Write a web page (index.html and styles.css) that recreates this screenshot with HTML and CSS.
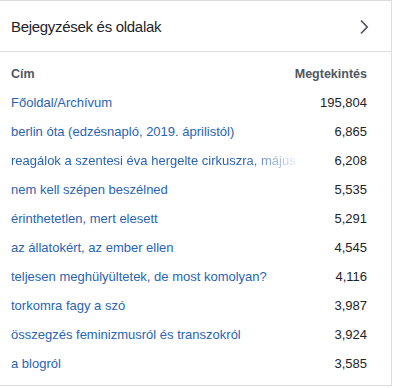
FILE: index.html
```html
<!DOCTYPE html>
<html lang="hu">
<head>
<meta charset="utf-8">
<link rel="stylesheet" href="styles.css">
</head>
<body>
<div class="card">
  <div class="card-head">
    <span class="card-title">Bejegyzések és oldalak</span>
    <svg class="chev" width="10" height="16" viewBox="0 0 10 16"><path d="M2 1.5 L8.2 8 L2 14.5" fill="none" stroke="#50575e" stroke-width="1.7"/></svg>
  </div>
  <div class="table">
    <div class="row th"><span class="t">Cím</span><span class="v">Megtekintés</span></div>
    <div class="row"><a class="t">Főoldal/Archívum</a><span class="v">195,804</span></div>
    <div class="row"><a class="t">berlin óta (edzésnapló, 2019. áprilistól)</a><span class="v">6,865</span></div>
    <div class="row"><a class="t fade">reagálok a szentesi éva hergelte cirkuszra, május</a><span class="v">6,208</span></div>
    <div class="row"><a class="t">nem kell szépen beszélned</a><span class="v">5,535</span></div>
    <div class="row"><a class="t">érinthetetlen, mert elesett</a><span class="v">5,291</span></div>
    <div class="row"><a class="t">az állatokért, az ember ellen</a><span class="v">4,545</span></div>
    <div class="row"><a class="t">teljesen meghülyültetek, de most komolyan?</a><span class="v">4,116</span></div>
    <div class="row"><a class="t">torkomra fagy a szó</a><span class="v">3,987</span></div>
    <div class="row"><a class="t">összegzés feminizmusról és transzokról</a><span class="v">3,924</span></div>
    <div class="row"><a class="t">a blogról</a><span class="v">3,585</span></div>
  </div>
</div>
</body>
</html>
```
FILE: styles.css
```css
html, body { margin: 0; padding: 0; background: #fff; }
body {
  font-family: "Liberation Sans", Arial, sans-serif;
  color: #1d2327;
  width: 394px;
  height: 388px;
}
.card {
  width: 392px;
  height: 386px;
  box-sizing: border-box;
  border-top: 1px solid #dcdcde;
  border-right: 1px solid #dcdcde;
  border-bottom: 1px solid #dcdcde;
  background: #fff;
}
.card-head {
  height: 51px;
  box-sizing: border-box;
  border-bottom: 1px solid #dcdcde;
  display: flex;
  align-items: center;
  justify-content: space-between;
  padding: 0 22px 0 11px;
}
.card-title {
  font-size: 15px;
  letter-spacing: -0.3px;
  color: #1d2327;
}
.chev { display: block; margin-top: 1px; }
.table {
  padding: 7px 24px 0 11px;
}
.row {
  height: 29px;
  display: flex;
  align-items: center;
  justify-content: space-between;
  gap: 10px;
  font-size: 13px;
}
.row .t {
  color: #2a64b0;
  white-space: nowrap;
  min-width: 0;
  flex: 0 1 auto;
}
.row .v { color: #1d2327; flex: none; }
.th .t, .th .v {
  color: #50575e;
  font-weight: bold;
  font-size: 12.5px;
}
.fade {
  -webkit-mask-image: linear-gradient(to right, #000 232px, rgba(0,0,0,0.12) 100%);
  mask-image: linear-gradient(to right, #000 232px, rgba(0,0,0,0.12) 100%);
}
```
